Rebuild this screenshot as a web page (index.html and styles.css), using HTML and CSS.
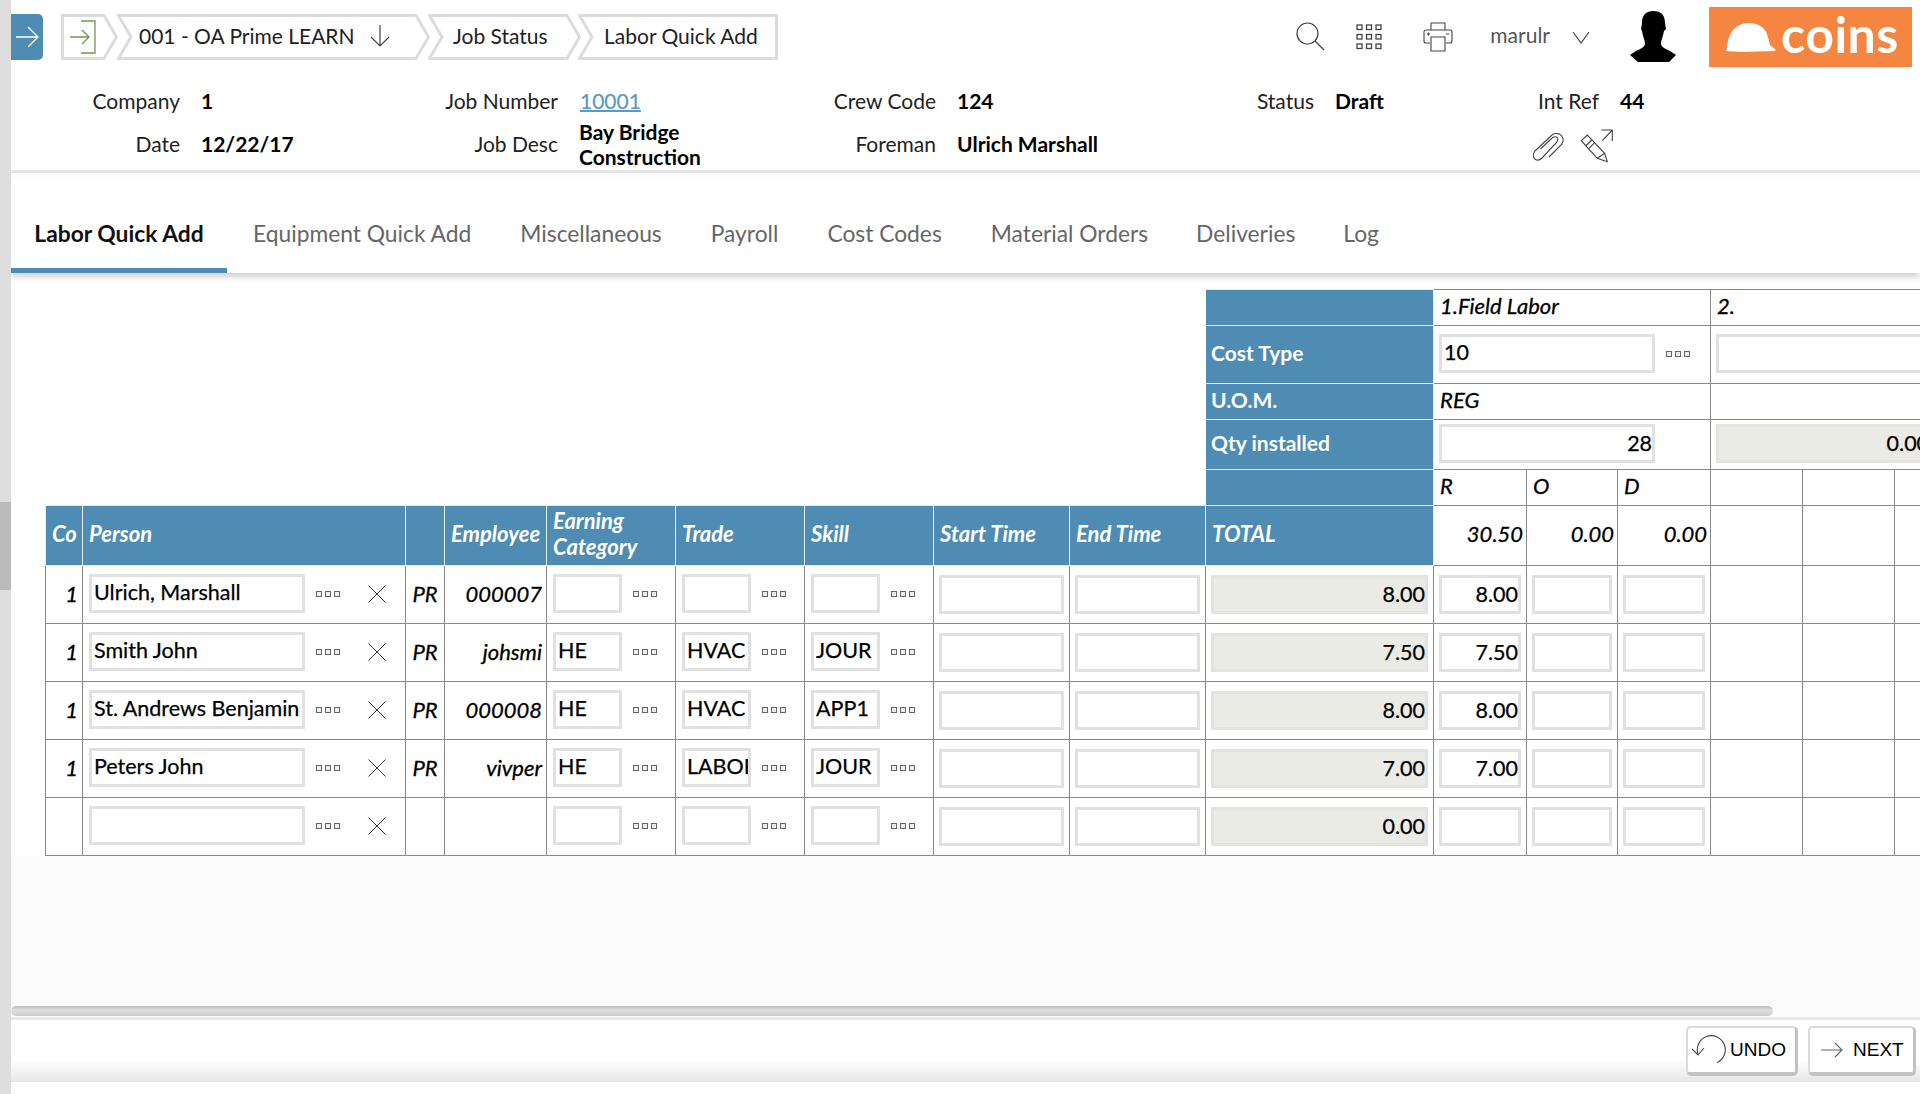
FILE: index.html
```html
<!DOCTYPE html>
<html lang="en">
<head>
<meta charset="utf-8">
<title>Labor Quick Add</title>
<link rel="stylesheet" href="styles.css">
</head>
<body>
<div class="app">
  <aside class="strip"><div class="strip-thumb"></div></aside>
  <div class="main">
    <header class="topbar">
      <nav class="crumbs">
        <a class="nav-toggle"><svg width="24" height="24" viewBox="0 0 24 24"><path d="M1 12h21M13 2l10 10-10 10" fill="none" stroke="#fff" stroke-width="1.3"/></svg></a>
        <div class="crumb crumb-home">
          <svg class="crumb-bg" viewBox="0 0 58 46" preserveAspectRatio="none"><path d="M1.5 1.5H43L55.5 23 43 44.5H1.5Z"/></svg>
          <svg class="home-icon" width="28" height="34" viewBox="0 0 28 34"><path d="M12 1h14v32H12" fill="none" stroke="#6f9a4a" stroke-width="1.3"/><path d="M1 17h19M13 10l7 7-7 7" fill="none" stroke="#6f9a4a" stroke-width="1.3"/></svg>
        </div>
        <div class="crumb crumb-a">
          <svg class="crumb-bg" viewBox="0 0 314 46" preserveAspectRatio="none"><path d="M1.5 1.5H299L311.5 23 299 44.5H1.5L14 23Z"/></svg>
          <span>001 - OA Prime LEARN</span>
          <svg class="down" width="22" height="24" viewBox="0 0 22 24"><path d="M11 1v21M2 13l9 9 9-9" fill="none" stroke="#444" stroke-width="1.2"/></svg>
        </div>
        <div class="crumb crumb-b">
          <svg class="crumb-bg" viewBox="0 0 153 46" preserveAspectRatio="none"><path d="M1.5 1.5H139L151.5 23 139 44.5H1.5L14 23Z"/></svg>
          <span>Job Status</span>
        </div>
        <div class="crumb crumb-c">
          <svg class="crumb-bg" viewBox="0 0 200 46" preserveAspectRatio="none"><path d="M1.5 1.5H198.5V44.5H1.5L14 23Z"/></svg>
          <span>Labor Quick Add</span>
        </div>
      </nav>
      <div class="tools">
        <svg class="t-search" width="29" height="29" viewBox="0 0 29 29"><circle cx="11.5" cy="11.5" r="10.5" fill="none" stroke="#444" stroke-width="1.2"/><path d="M19 19l9 9" stroke="#444" stroke-width="1.2"/></svg>
        <svg class="t-grid" width="26" height="26" viewBox="0 0 26 26" fill="none" stroke="#444" stroke-width="1.3"><rect x="1" y="1" width="5" height="4.5"/><rect x="10.5" y="1" width="5" height="4.5"/><rect x="20" y="1" width="5" height="4.5"/><rect x="1" y="10.5" width="5" height="4.5"/><rect x="10.5" y="10.5" width="5" height="4.5"/><rect x="20" y="10.5" width="5" height="4.5"/><rect x="1" y="20" width="5" height="4.5"/><rect x="10.5" y="20" width="5" height="4.5"/><rect x="20" y="20" width="5" height="4.5"/></svg>
        <svg class="t-print" width="30" height="30" viewBox="0 0 30 30" fill="none" stroke="#444" stroke-width="1.1"><path d="M8 8V1h14v7"/><path d="M7 21H3a2 2 0 0 1-2-2V10a2 2 0 0 1 2-2h24a2 2 0 0 1 2 2v9a2 2 0 0 1-2 2h-4"/><path d="M8 15h14v14H8z"/><path d="M4 12h3M23 12h3M5.500 10.500v3"/></svg>
        <span class="user">marulr</span>
        <svg class="t-chev" width="18" height="13" viewBox="0 0 18 13"><path d="M1 1l8 11 8-11" fill="none" stroke="#444" stroke-width="1.2"/></svg>
        <svg class="t-avatar" width="46" height="51" viewBox="0 0 46 51"><path d="M23.500 0C31 0 35 4 35 12L36 18 34 20C33 26 31 29 31 33 31 36 36 38 40 40L46 44 39 51H8L0 44 6 40C10 38 15 36 15 33 15 29 13 26 12 20L11 18 12 12C12 4 16 0 23.500 0Z"/></svg>
        <div class="logo">
          <svg width="50" height="29" viewBox="0 0 50 29"><path d="M1 25C2 14 6 1 22 0 30 0 37 3 40 9 42 13 43 18 44 22L50 27 48 28 15 29 0 28Z" fill="#fff"/></svg>
          <span>coins</span>
        </div>
      </div>
    </header>

    <section class="info">
      <div class="info-col col1">
        <div class="field"><label>Company</label><b>1</b></div>
        <div class="field"><label>Date</label><b>12/22/17</b></div>
      </div>
      <div class="info-col col2">
        <div class="field"><label>Job Number</label><a href="#">10001</a></div>
        <div class="field"><label>Job Desc</label><b class="desc">Bay Bridge Construction</b></div>
      </div>
      <div class="info-col col3">
        <div class="field"><label>Crew Code</label><b>124</b></div>
        <div class="field"><label>Foreman</label><b>Ulrich Marshall</b></div>
      </div>
      <div class="info-col col4">
        <div class="field"><label>Status</label><b>Draft</b></div>
      </div>
      <div class="info-col col5">
        <div class="field"><label>Int Ref</label><b>44</b></div>
        <div class="attach">
          <svg class="clip" width="31" height="28" viewBox="0 0 31 28" fill="none" stroke="#444" stroke-width="1.1"><path d="M16 24 29 11C31 7 30 3 27 1.500 24 0 21 .5 19 2L2 18C-.5 21 0 25 2.500 26.500 5 28 7 27 9 25L24 9C25 7 25 5 23.500 4 22 3.500 20 4 18 6L7.500 16"/></svg>
          <svg width="34" height="34" viewBox="0 0 34 34" fill="none" stroke="#444" stroke-width="1.1"><path d="M21.300 1H32.300V12M32.300 1 22.300 11.700"/><path d="M1.300 11.700 7.300 6 24.700 24.300 27.300 32.700 17.300 29.300Z"/><path d="M5.700 17 11.700 11M9 19.300 14.700 13.700M17.300 29.300 24.700 24.300"/></svg>
        </div>
      </div>
    </section>

    <nav class="tabs">
      <a class="tab active">Labor Quick Add</a>
      <a class="tab t2">Equipment Quick Add</a>
      <a class="tab t3">Miscellaneous</a>
      <a class="tab t4">Payroll</a>
      <a class="tab t5">Cost Codes</a>
      <a class="tab t6">Material Orders</a>
      <a class="tab t7">Deliveries</a>
      <a class="tab t8">Log</a>
    </nav>

    <div class="sheet">
      <table class="grid">
        <colgroup>
          <col class="w37"><col class="w323"><col class="w39"><col class="w102"><col class="w129"><col class="w129"><col class="w129"><col class="w136"><col class="w136"><col class="w228"><col class="w93"><col class="w91"><col class="w93"><col class="w92"><col class="w92"><col class="w92">
        </colgroup>
        <tbody>
          <tr class="h36">
            <td class="blank" colspan="9" rowspan="5"></td>
            <th class="side"></th>
            <td class="it lead" colspan="3">1.Field Labor</td>
            <td class="it lead" colspan="3">2.</td>
          </tr>
          <tr class="h58">
            <th class="side">Cost Type</th>
            <td class="flex-cell" colspan="3"><div class="with-dots"><input class="in" value="10"><i class="dots"></i></div></td>
            <td class="flex-cell" colspan="3"><input class="in over" value=""></td>
          </tr>
          <tr class="h36">
            <th class="side">U.O.M.</th>
            <td class="it lead" colspan="3">REG</td>
            <td colspan="3"></td>
          </tr>
          <tr class="h50">
            <th class="side">Qty installed</th>
            <td class="flex-cell" colspan="3"><div class="with-dots"><input class="in num" value="28"><i class="dots hidden"></i></div></td>
            <td class="flex-cell" colspan="3"><input class="in num ro over" value="0.00"></td>
          </tr>
          <tr class="h36">
            <th class="side"></th>
            <td class="it lead">R</td><td class="it lead">O</td><td class="it lead">D</td><td></td><td></td><td></td>
          </tr>
          <tr class="h60">
            <th class="hd co">Co</th><th class="hd">Person</th><th class="hd"></th><th class="hd">Employee</th><th class="hd">Earning Category</th><th class="hd">Trade</th><th class="hd">Skill</th><th class="hd">Start Time</th><th class="hd">End Time</th><th class="hd tot">TOTAL</th>
            <td class="it r sum">30.50</td><td class="it r sum">0.00</td><td class="it r sum">0.00</td><td></td><td></td><td></td>
          </tr>
          <tr class="h58">
            <td class="it r">1</td>
            <td class="pad"><div class="with-x"><input class="in" value="Ulrich, Marshall"><i class="dots"></i><svg class="x" viewBox="0 0 18 18"><path d="M.5.5l17 17M17.500.5l-17 17"/></svg></div></td>
            <td class="it c">PR</td><td class="it r">000007</td>
            <td class="pad"><div class="with-dots"><input class="in" value=""><i class="dots"></i></div></td>
            <td class="pad"><div class="with-dots"><input class="in" value=""><i class="dots"></i></div></td>
            <td class="pad"><div class="with-dots"><input class="in" value=""><i class="dots"></i></div></td>
            <td class="pad"><input class="in" value=""></td><td class="pad"><input class="in" value=""></td>
            <td class="pad"><input class="in num ro" value="8.00"></td>
            <td class="pad"><input class="in num" value="8.00"></td><td class="pad"><input class="in" value=""></td><td class="pad"><input class="in" value=""></td><td></td><td></td><td></td>
          </tr>
          <tr class="h58">
            <td class="it r">1</td>
            <td class="pad"><div class="with-x"><input class="in" value="Smith John"><i class="dots"></i><svg class="x" viewBox="0 0 18 18"><path d="M.5.5l17 17M17.500.5l-17 17"/></svg></div></td>
            <td class="it c">PR</td><td class="it r">johsmi</td>
            <td class="pad"><div class="with-dots"><input class="in" value="HE"><i class="dots"></i></div></td>
            <td class="pad"><div class="with-dots"><input class="in" value="HVAC"><i class="dots"></i></div></td>
            <td class="pad"><div class="with-dots"><input class="in" value="JOUR"><i class="dots"></i></div></td>
            <td class="pad"><input class="in" value=""></td><td class="pad"><input class="in" value=""></td>
            <td class="pad"><input class="in num ro" value="7.50"></td>
            <td class="pad"><input class="in num" value="7.50"></td><td class="pad"><input class="in" value=""></td><td class="pad"><input class="in" value=""></td><td></td><td></td><td></td>
          </tr>
          <tr class="h58">
            <td class="it r">1</td>
            <td class="pad"><div class="with-x"><input class="in" value="St. Andrews Benjamin"><i class="dots"></i><svg class="x" viewBox="0 0 18 18"><path d="M.5.5l17 17M17.500.5l-17 17"/></svg></div></td>
            <td class="it c">PR</td><td class="it r">000008</td>
            <td class="pad"><div class="with-dots"><input class="in" value="HE"><i class="dots"></i></div></td>
            <td class="pad"><div class="with-dots"><input class="in" value="HVAC"><i class="dots"></i></div></td>
            <td class="pad"><div class="with-dots"><input class="in" value="APP1"><i class="dots"></i></div></td>
            <td class="pad"><input class="in" value=""></td><td class="pad"><input class="in" value=""></td>
            <td class="pad"><input class="in num ro" value="8.00"></td>
            <td class="pad"><input class="in num" value="8.00"></td><td class="pad"><input class="in" value=""></td><td class="pad"><input class="in" value=""></td><td></td><td></td><td></td>
          </tr>
          <tr class="h58">
            <td class="it r">1</td>
            <td class="pad"><div class="with-x"><input class="in" value="Peters John"><i class="dots"></i><svg class="x" viewBox="0 0 18 18"><path d="M.5.5l17 17M17.500.5l-17 17"/></svg></div></td>
            <td class="it c">PR</td><td class="it r">vivper</td>
            <td class="pad"><div class="with-dots"><input class="in" value="HE"><i class="dots"></i></div></td>
            <td class="pad"><div class="with-dots"><input class="in" value="LABOR"><i class="dots"></i></div></td>
            <td class="pad"><div class="with-dots"><input class="in" value="JOUR"><i class="dots"></i></div></td>
            <td class="pad"><input class="in" value=""></td><td class="pad"><input class="in" value=""></td>
            <td class="pad"><input class="in num ro" value="7.00"></td>
            <td class="pad"><input class="in num" value="7.00"></td><td class="pad"><input class="in" value=""></td><td class="pad"><input class="in" value=""></td><td></td><td></td><td></td>
          </tr>
          <tr class="h58">
            <td></td>
            <td class="pad"><div class="with-x"><input class="in" value=""><i class="dots"></i><svg class="x" viewBox="0 0 18 18"><path d="M.5.5l17 17M17.500.5l-17 17"/></svg></div></td>
            <td></td><td></td>
            <td class="pad"><div class="with-dots"><input class="in" value=""><i class="dots"></i></div></td>
            <td class="pad"><div class="with-dots"><input class="in" value=""><i class="dots"></i></div></td>
            <td class="pad"><div class="with-dots"><input class="in" value=""><i class="dots"></i></div></td>
            <td class="pad"><input class="in" value=""></td><td class="pad"><input class="in" value=""></td>
            <td class="pad"><input class="in num ro" value="0.00"></td>
            <td class="pad"><input class="in" value=""></td><td class="pad"><input class="in" value=""></td><td class="pad"><input class="in" value=""></td><td></td><td></td><td></td>
          </tr>
        </tbody>
      </table>
    </div>

    <div class="below">
      <div class="hscroll"></div>
    </div>

    <footer class="actions">
      <button class="btn undo"><svg width="34" height="30" viewBox="0 0 34 30" fill="none" stroke="#444" stroke-width="1.1"><path d="M25 27.500A14 14 0 1 0 6 19"/><path d="M0 14l6 6 6-7"/></svg>UNDO</button>
      <button class="btn next"><svg width="22" height="16" viewBox="0 0 22 16" fill="none" stroke="#666" stroke-width="1.1"><path d="M0 8h21M14 1l7 7-7 7"/></svg>NEXT</button>
    </footer>
  </div>
</div>
</body>
</html>
```
FILE: styles.css
```css
*, *::before, *::after { box-sizing: border-box; }
html, body { margin: 0; height: 100%; }
body { font-family: Lato, "Liberation Sans", sans-serif; font-size: 21px; color: #000; background: #fff; overflow: hidden; }
.app { display: flex; width: 1920px; height: 1094px; overflow: hidden; }
.strip { width: 11px; background: #dedede; flex: none; position: relative; }
.strip-thumb { position: absolute; left: 0; top: 502px; width: 11px; height: 88px; background: #bbb; }
.main { width: 1909px; display: flex; flex-direction: column; overflow: hidden; }

.topbar { height: 74px; display: flex; justify-content: space-between; padding-top: 7px; }
.crumbs { display: flex; align-items: flex-start; padding-top: 7px; }
.nav-toggle { width: 32px; height: 46px; background: #4f8cb3; border-radius: 0 5px 5px 0; display: flex; align-items: center; justify-content: center; margin-right: 18px; }
.crumb { position: relative; height: 46px; display: flex; align-items: center; color: #222; font-size: 21px; padding-bottom: 3px; }
.crumb-bg { position: absolute; inset: 0; width: 100%; height: 100%; }
.crumb-bg path { fill: #fff; stroke: #dcdcdc; stroke-width: 3; }
.crumb span, .crumb > svg:not(.crumb-bg) { position: relative; }
.crumb-home { width: 58px; padding: 0 0 0 8px; }
.crumb-a { width: 314px; margin-left: -2px; padding-left: 22px; }
.crumb-a .down { margin-left: 14px; }
.crumb-b { width: 153px; margin-left: -3px; padding-left: 25px; }
.crumb-c { width: 200px; margin-left: -3px; padding-left: 26px; }

.tools { display: flex; align-items: flex-start; padding-right: 8px; position: relative; }
.t-search { margin-top: 15px; }
.t-grid { margin: 17px 0 0 31px; }
.t-print { margin: 15px 0 0 41px; }
.user { margin: 15px 0 0 37px; color: #555; font-size: 21px; line-height: 26px; }
.t-chev { margin: 24px 0 0 22px; }
.t-avatar { margin: 4px 0 0 40px; }
.logo { margin-left: 33px; width: 203px; height: 60px; background: #f58642; display: flex; align-items: center; padding: 0 0 0 17px; color: #fff; }
.logo svg { flex: none; }
.logo span { font-size: 50px; line-height: 60px; font-weight: 700; margin: -7px 0 0 5px; letter-spacing: .5px; }

.info { height: 99px; display: flex; border-bottom: 3px solid #e6e6e6; position: relative; }
.info-col { display: flex; flex-direction: column; padding-top: 5px; }
.field { display: flex; align-items: flex-start; height: 43px; line-height: 43px; position: relative; }
.field label { text-align: right; color: #222; display: block; flex: none; }
.field b { font-weight: 700; margin-left: 21px; font-size: 21px; }
.field a { margin-left: 22px; color: #5b9ac4; text-decoration: underline; text-decoration-thickness: 2px; -webkit-text-stroke: .2px #5b9ac4; }
.field b.desc { line-height: 25px; width: 130px; display: block; margin-top: -3px; }
.col1 { width: 340px; }
.col1 label { width: 169px; }
.col2 { width: 380px; }
.col2 label { width: 207px; }
.col3 { width: 400px; }
.col3 label { width: 205px; }
.col4 { width: 398px; }
.col4 label { width: 183px; }
.col5 label { width: 70px; }
.attach { display: flex; gap: 16px; align-items: flex-start; margin: 7px 0 0 4px; }
.clip { margin-top: 4px; }

.tabs { height: 100px; display: flex; align-items: stretch; box-shadow: 0 4px 6px rgba(0,0,0,.18); position: relative; background: linear-gradient(#fbfbfb, #fff 8px); }
.tab { display: flex; align-items: center; color: #666; font-size: 22.8px; padding-top: 20px; }
.tab.active { width: 216px; justify-content: center; color: #111; font-weight: 700; border-bottom: 5px solid #4f8cb3; padding-top: 25px; }
.t2 { margin-left: 26px; }
.t3 { margin-left: 49px; }
.t4 { margin-left: 49px; }
.t5 { margin-left: 49px; }
.t6 { margin-left: 49px; }
.t7 { margin-left: 48px; }
.t8 { margin-left: 48px; }

.sheet { flex: none; height: 583px; padding: 16px 0 0 34px; background: #fff; overflow: hidden; }
.grid { table-layout: fixed; border-collapse: collapse; width: 1941px; }
.w37 { width: 37px; } .w323 { width: 323px; } .w39 { width: 39px; } .w102 { width: 102px; } .w129 { width: 129px; } .w136 { width: 136px; } .w228 { width: 228px; } .w93 { width: 93px; } .w91 { width: 91px; } .w92 { width: 92px; }
.h36 { height: 36px; } .h50 { height: 50px; } .h58 { height: 58px; } .h60 { height: 60px; }
.grid td { border: 1px solid #888; padding: 0 4px 3px; font-size: 22px; white-space: nowrap; overflow: hidden; }
.grid td.blank { border: none; border-right: 1px solid #fff; border-bottom: 1px solid #e8e8e8; }
.grid th { background: #4f8cb3; color: #fff; border: 1px solid #e3edf3; padding: 0 5px 5px; text-align: left; font-size: 21px; font-weight: 700; }
.grid th.hd { font-style: italic; font-size: 22px; font-weight: 700; line-height: 26px; padding: 0 5px 3px 6px; }
.grid th.hd.co { padding: 0 0 3px 6px; }
.it { font-style: italic; -webkit-text-stroke: .3px #000; }
.r { text-align: right; }
.c { text-align: center; }
.grid td.lead { padding: 0 4px 5px 6px; }
.grid td.sum { padding: 0 3px 5px 0; }
.grid td.flex-cell { padding: 0 0 2px 5px; }
.grid td.pad { padding: 0 5px 2px; }
.pad > .in { margin-top: 2px; }

.in { display: block; width: 100%; height: 39px; border: 3px solid #e1e1e1; background: #fff; font: 400 21.5px Lato, sans-serif; color: #000; padding: 0 0 4px 2px; outline: none; min-width: 0; -webkit-text-stroke: .25px #000; }
.num { text-align: right; padding: 0 0 2px 0; }
.ro { background: #ebebe6; border-color: #e3e3df; }
.over { width: 216px; }
.with-dots { display: flex; align-items: center; margin-left: 1px; }
.with-dots .in { flex: 1; }
.with-dots .dots { margin: 0 31px 0 11px; }
.flex-cell .with-dots { margin-left: 0; }
.flex-cell .with-dots .dots { margin-right: 38px; }
.with-x { display: flex; align-items: center; margin-left: 1px; }
.with-x .in { width: 216px; flex: none; }
.with-x .dots { margin: 0 46px 0 11px; }
.x { width: 18px; height: 18px; flex: none; }
.x path { stroke: #333; stroke-width: 1; fill: none; }
.dots, .dots::before, .dots::after { display: block; width: 6px; height: 6px; flex: none; border: 1px solid #666; background: #eee; }
.dots { position: relative; }
.dots::before, .dots::after { content: ""; position: absolute; top: -1px; }
.dots::before { left: 8px; }
.dots::after { left: 17px; }
.dots.hidden, .dots.hidden::before, .dots.hidden::after { visibility: hidden; }

.below { flex: none; height: 161px; background: #fbfbfb; padding-top: 150px; }
.hscroll { height: 10px; width: 1762px; border-radius: 5px; background: linear-gradient(#bcbcbc, #dedede 40%, #d4d4d4 80%, #c4c4c4); }
.actions { flex: 1; display: flex; justify-content: flex-end; gap: 10px; padding: 6px 4px 0 0; background: linear-gradient(#fff 0, #fff 40px, #e6e6e6 62px, #fff 62px); border-top: 3px solid #e8e8e8; }
.btn { height: 50px; background: #fff; border: 2px solid #dcdcdc; border-right: 3px solid #c2c2c2; border-bottom: 4px solid #c2c2c2; border-radius: 5px; font: 400 19px "Liberation Sans", sans-serif; color: #000; display: flex; align-items: center; padding: 0; }
.undo { width: 112px; padding-left: 4px; }
.undo svg { margin-right: 4px; }
.next { width: 108px; padding-left: 11px; }
.next svg { margin-right: 10px; }
```
